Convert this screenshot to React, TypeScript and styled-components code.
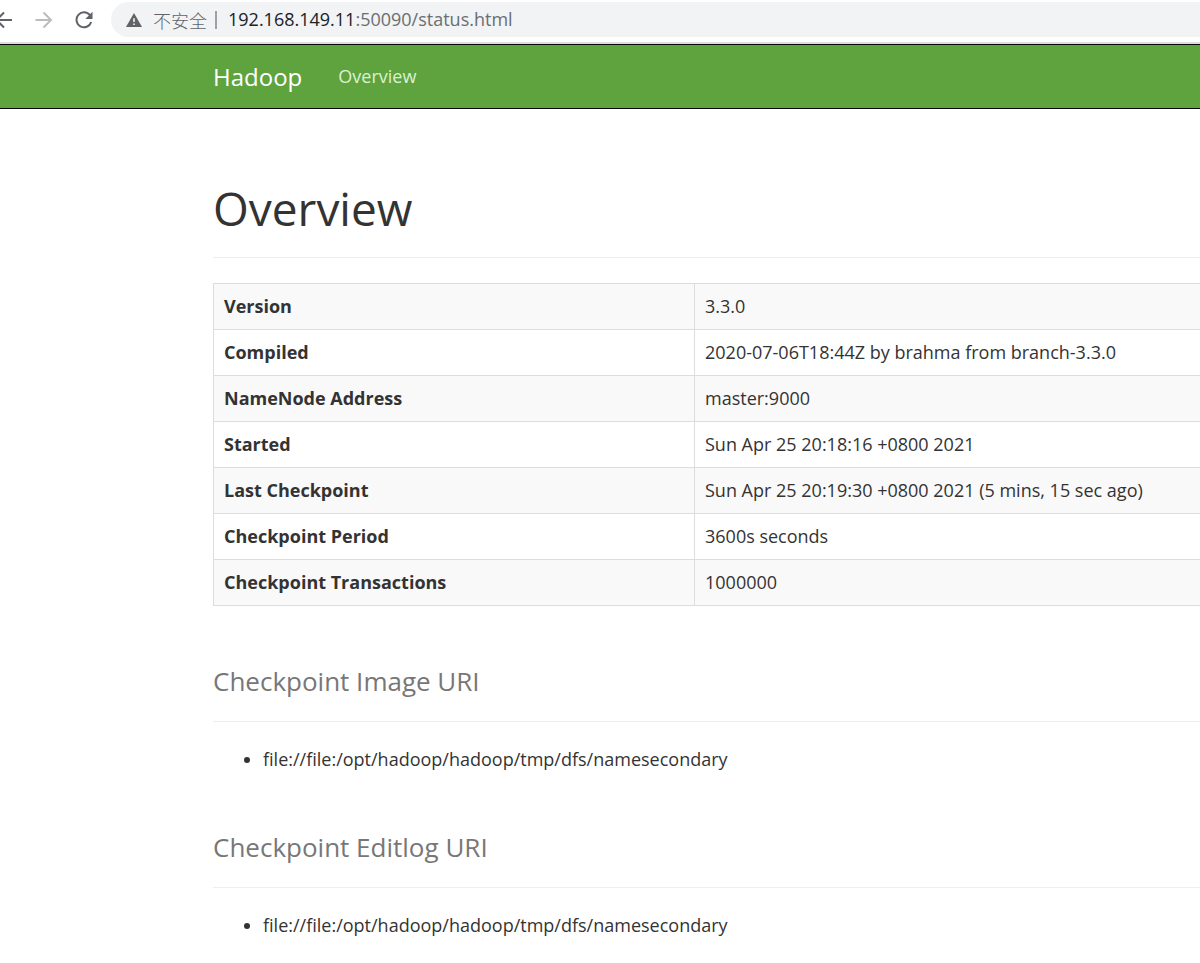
import React from 'react';
import styled, { createGlobalStyle } from 'styled-components';

const GlobalStyle = createGlobalStyle`
  *, *::before, *::after { box-sizing: border-box; }
  body {
    margin: 0;
    overflow-x: hidden;
    background: #fff;
    color: #333;
    font-family: "Open Sans", "Noto Sans", "Noto Sans CJK SC", sans-serif;
    font-size: 18px;
    line-height: 25px;
  }
`;

const Toolbar = styled.header`
  display: flex;
  align-items: center;
  height: 44px;
  padding-bottom: 3px;
  border-bottom: 2px solid #dadce0;
  background: #fff;
`;

const IconButton = styled.button`
  display: flex;
  flex: none;
  align-items: center;
  justify-content: center;
  width: 40px;
  height: 36px;
  padding: 0;
  border: 0;
  background: none;
  color: #5f6368;
  &:first-child { margin-left: -16px; }
  &:disabled { color: #babcbe; }
`;

const AddressBar = styled.div`
  display: flex;
  flex: 1;
  align-items: center;
  height: 35px;
  margin-left: 7px;
  padding-left: 15px;
  border-radius: 18px 0 0 18px;
  background: #f1f3f4;
  color: #5f6368;
  white-space: nowrap;
`;

const Security = styled.span`
  margin-left: 11px;
  padding-right: 8px;
  border-right: 2px solid #9aa0a6;
  font-family: "Noto Sans CJK SC", sans-serif;
  font-weight: 300;
  line-height: 18px;
`;

const Url = styled.span`
  margin-left: 11px;
  color: #6b6e72;
`;

const Host = styled.span`
  color: #202124;
`;

const Navbar = styled.nav`
  display: flex;
  align-items: center;
  height: 65px;
  padding-left: 213px;
  border: solid #080808;
  border-width: 1px 0;
  background: #5fa33e;
`;

const Brand = styled.a`
  color: #fff;
  font-size: 24px;
  line-height: 24px;
  text-decoration: none;
`;

const NavLink = styled.a`
  margin-left: 36px;
  color: #dcf0d3;
  text-decoration: none;
`;

const Content = styled.main`
  padding: 51px 0 24px 213px;
`;

const Heading = styled.header`
  margin: 0 0 25px;
  padding: 21px 0;
  border-bottom: 1px solid #eee;
`;

const Title = styled.h1`
  margin: 0;
  font-size: 46px;
  font-weight: 400;
  line-height: 55px;
`;

const SectionHeading = styled.h2`
  margin: 0;
  padding: 0 0 25px;
  border-bottom: 1px solid #eee;
  color: #777;
  font-size: 26px;
  font-weight: 400;
  line-height: 30px;
`;

const Section = styled.section`
  padding-top: 60px;
`;

const Table = styled.table`
  width: 100%;
  table-layout: fixed;
  border-collapse: collapse;
  border: 1px solid #ddd;
  border-right: 0;
`;

const Row = styled.tr`
  height: 46px;
  border-bottom: 1px solid #ddd;
  &:nth-child(odd) { background: #f9f9f9; }
`;

const Label = styled.th`
  width: 481px;
  padding: 10px;
  border-right: 1px solid #ddd;
  font-weight: 700;
  text-align: left;
`;

const Value = styled.td`
  padding: 10px;
`;

const List = styled.ul`
  margin: 25px 0 0;
  padding-left: 50px;
`;

const details = [
  ['Version', '3.3.0'],
  ['Compiled', '2020-07-06T18:44Z by brahma from branch-3.3.0'],
  ['NameNode Address', 'master:9000'],
  ['Started', 'Sun Apr 25 20:18:16 +0800 2021'],
  ['Last Checkpoint', 'Sun Apr 25 20:19:30 +0800 2021 (5 mins, 15 sec ago)'],
  ['Checkpoint Period', '3600s seconds'],
  ['Checkpoint Transactions', '1000000'],
];

const locations = [
  { title: 'Checkpoint Image URI', uris: ['file://file:/opt/hadoop/hadoop/tmp/dfs/namesecondary'] },
  { title: 'Checkpoint Editlog URI', uris: ['file://file:/opt/hadoop/hadoop/tmp/dfs/namesecondary'] },
];

const Arrow = ({ back = false }: { back?: boolean }) => (
  <svg width="18" height="18" viewBox="0 0 18 18" fill="none" stroke="currentColor" strokeWidth="2">
    <path d={back ? 'M17 9H2M9 1.5L1.5 9L9 16.5' : 'M0.5 9H15.5M8.5 1.5L16 9L8.5 16.5'} />
  </svg>
);

const Reload = () => (
  <svg width="18" height="18" viewBox="0 0 18 18">
    <path d="M15 4.2A7.5 7.5 0 1 0 16.2 11" fill="none" stroke="currentColor" strokeWidth="2" />
    <path d="M17.5 0.8V8H10.3Z" fill="currentColor" />
  </svg>
);

const Warning = () => (
  <svg width="16" height="14" viewBox="0 0 16 14">
    <path d="M8 0L16 14H0Z" fill="#5f6368" />
    <path d="M7.2 5.2H8.8V9H7.2ZM7.2 10.4H8.8V12H7.2Z" fill="#f1f3f4" />
  </svg>
);

export default function App() {
  return (
    <>
      <GlobalStyle />
      <Toolbar>
        <IconButton aria-label="Back"><Arrow back /></IconButton>
        <IconButton aria-label="Forward" disabled><Arrow /></IconButton>
        <IconButton aria-label="Reload"><Reload /></IconButton>
        <AddressBar>
          <Warning />
          <Security>不安全</Security>
          <Url><Host>192.168.149.11</Host>:50090/status.html</Url>
        </AddressBar>
      </Toolbar>
      <Navbar>
        <Brand href="#">Hadoop</Brand>
        <NavLink href="#overview">Overview</NavLink>
      </Navbar>
      <Content id="overview">
        <Heading><Title>Overview</Title></Heading>
        <Table>
          <tbody>
            {details.map(([label, value]) => (
              <Row key={label}>
                <Label scope="row">{label}</Label>
                <Value>{value}</Value>
              </Row>
            ))}
          </tbody>
        </Table>
        {locations.map(({ title, uris }) => (
          <Section key={title}>
            <SectionHeading>{title}</SectionHeading>
            <List>{uris.map((uri) => <li key={uri}>{uri}</li>)}</List>
          </Section>
        ))}
      </Content>
    </>
  );
}
